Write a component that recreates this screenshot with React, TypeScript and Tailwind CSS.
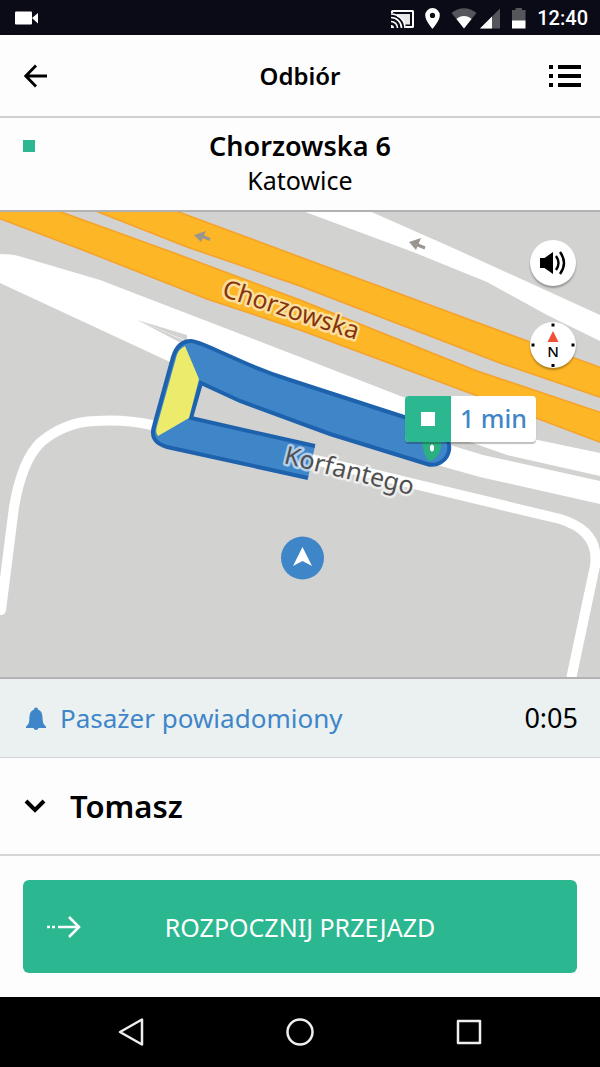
import React, { useState } from 'react';

function StatusBar() {
  return (
    <div className="flex h-[35px] shrink-0 items-center justify-between bg-[#0a0b16] pr-3 pl-[15px] text-white">
      <svg className="h-[14px] w-[23px]" viewBox="0 0 23 14" fill="currentColor">
        <rect width="17" height="13" y="0.5" rx="1" />
        <path d="M17 7l6-5v10.500z" />
      </svg>
      <div className="flex items-center">
        <svg className="h-[22px] w-[136px]" viewBox="391 6 136 22" fill="currentColor">
          <path d="M391 12V10.500a1.500 1.500 0 0 1 1.500-1.500h20a1.500 1.500 0 0 1 1.500 1.500v15a1.500 1.500 0 0 1-1.500 1.500h-7v-2h6.500V11h-19v1z" />
          <path d="M397 13h13v10.500h-5c-.8-4-3.500-6.500-8-7.800z" fillOpacity="0.9" />
          <path d="M391 24a3 3 0 0 1 3 3h-3z" />
          <path d="M391 20.500a6.500 6.500 0 0 1 6.500 6.500M391 16.500A10.500 10.500 0 0 1 401.500 27M391 13A14 14 0 0 1 405 27" fill="none" stroke="currentColor" strokeWidth="1.600" />
          <path d="M432.500 7a7.300 7.300 0 0 0-7.300 7.300c0 5.400 7.300 13.500 7.300 13.500s7.300-8.100 7.300-13.500A7.300 7.300 0 0 0 432.500 7zm0 4.800a2.600 2.600 0 1 1 0 5.200 2.600 2.600 0 0 1 0-5.200z" />
          <path d="M451.500 12c7-6.500 18-6.500 25 0l-12.500 15.500z" fill="#55565c" />
          <path d="M456.500 18c4-4 11-4 15 0l-7.500 9.500z" />
          <path d="M500 7.500V27.500H480z" fill="#55565c" />
          <path d="M492 15.500V27.500H480z" />
          <path d="M512 9h3.500V7h6.500v2h3.500v11H512z" fill="#55565c" />
          <path d="M512 19.500h13.500v8H512z" />
        </svg>
        <span className="ml-[10px] font-[Roboto] text-[20px] leading-6 font-medium">12:40</span>
      </div>
    </div>
  );
}

function Header() {
  return (
    <header className="flex h-[83px] shrink-0 items-center justify-between border-b-2 border-[#d0d0d0] pr-[19px] pl-6">
      <button type="button" aria-label="Wstecz" className="w-[27px]">
        <svg className="h-6 w-6" viewBox="0 0 24 24" fill="none" stroke="black" strokeWidth="2.800">
          <path d="M12 1.500L1.800 12 12 22.500M1.500 12H23" />
        </svg>
      </button>
      <h1 className="text-[24px] leading-8 font-semibold">Odbiór</h1>
      <button type="button" aria-label="Lista" className="w-8">
        <svg className="h-[22px] w-8" viewBox="0 0 32 22">
          <path d="M0 0h4v4H0zM0 9h4v4H0zM0 18h4v4H0zM9 0h23v4H9zM9 9h23v4H9zM9 18h23v4H9z" />
        </svg>
      </button>
    </header>
  );
}

function Address() {
  return (
    <section className="relative flex h-[92px] shrink-0 flex-col items-center pt-3">
      <span className="absolute top-[22px] left-[23px] h-3 w-3 bg-[#2bb78f]" />
      <p className="text-[27px] leading-8 font-semibold">Chorzowska 6</p>
      <p className="mt-[2px] text-[25px] leading-8">Katowice</p>
    </section>
  );
}

function MapDrawing() {
  return (
    <svg className="absolute inset-0 h-full w-full" viewBox="0 210 600 469" preserveAspectRatio="xMidYMid slice">
      <rect y="210" width="600" height="469" fill="#d2d2d1" />

      {/* white roads */}
      <path d="M300 210H367L453 248L600 315V341L547 315L487 282L413 252z" fill="white" />
      <path d="M0 254Q14 254 22 257L100 280L300 357L403 397L533 439L600 453V476L507 455L473 443L440 436L190 343L137 320L187 346L404 430L450 445L483 455L600 481V504L480 477L430 463L170 362L0 283z" fill="white" />
      <path d="M137 320L187 335L187 341z" fill="#d2d2d1" />
      <path d="M1 610L14 507Q22 460 41 442Q65 422 95 421Q125 419 152 425L310 459L560 519Q600 531 595 566L570 684" fill="none" stroke="white" strokeWidth="10" strokeLinecap="round" />

      {/* Chorzowska, both lanes */}
      <g fill="#fdb625" stroke="#f6a22a" strokeWidth="1.500">
        <path d="M88 208L187 247L300 286L500 363L602 398V368L530 342L300 257L168 208z" />
        <path d="M-2 218L80 249L207 299L300 330L475 395L602 443V413L477 371L300 300L177 254L50 208H-2z" />
      </g>

      {/* one-way arrows */}
      <g fill="none" stroke="#98968e" strokeWidth="3">
        <path d="M199 235L210 239.500" />
        <path d="M413 243L425 248" />
      </g>
      <path d="M194 235L206 231L201 242zM409 242L421 238L416 250z" fill="#98968e" />

      <text transform="translate(221 296) rotate(18)" fontSize="25" fontFamily="Noto Sans, sans-serif" fill="#84330d" stroke="#fbdf9e" strokeWidth="5" strokeLinejoin="round" paintOrder="stroke">
        Chorzowska
      </text>

      {/* route */}
      <path d="M308 478L167 447Q149 442 154 426L173 357Q178 341 191 341Q196 341 218 351L245 363Q268 373 290 380L404 417L437 431A17 17 0 0 1 427 464L330 434L240 401L201 383L191 418L315 446z" fill="#3f86c9" />
      <path d="M308 478L167 447Q149 442 154 426L173 357Q178 341 191 341Q196 341 218 351L245 363Q268 373 290 380L404 417L437 431A17 17 0 0 1 427 464L330 434L240 401L201 383L191 418L315 446" fill="none" stroke="#1e62ad" strokeWidth="4" />
      <path d="M185 346L199 379L189 418L158 436Q155 432 157 426L176 358Q178 349 185 346z" fill="#edeb6b" />

      <text transform="translate(283 463) rotate(14)" fontSize="25" fontFamily="Noto Sans, sans-serif" fill="#505050" stroke="#ffffff" strokeOpacity="0.600" strokeWidth="5" strokeLinejoin="round" paintOrder="stroke">
        Korfantego
      </text>

      {/* destination pin */}
      <path d="M422 440H441Q442 450 437 456Q433 461 429 461Q423 455 422 440z" fill="#2bb07f" />
      <ellipse cx="432" cy="448" rx="2" ry="3.500" fill="white" />

      {/* vehicle */}
      <circle cx="302.500" cy="558" r="21.500" fill="#3f86c9" />
      <path d="M302.500 547L312 566L302.500 561L293 566z" fill="white" />
    </svg>
  );
}

function MapView() {
  const [muted, setMuted] = useState(false);

  return (
    <main className="relative min-h-[300px] flex-1 overflow-hidden border-y-2 border-[#b2b2b2]">
      <MapDrawing />
      <div className="absolute top-[184px] left-[405px] flex h-[46px] overflow-hidden rounded-sm bg-white shadow-[0_2px_1px_rgba(0,0,0,0.25)]">
        <div className="flex w-[46px] items-center justify-center bg-[#2bb78f]">
          <span className="h-[14px] w-[14px] bg-white" />
        </div>
        <span className="flex w-[85px] items-center justify-center text-[25px] font-medium text-[#3f86c9]">1 min</span>
      </div>
      <div className="absolute top-7 right-6 flex flex-col gap-9">
        <button
          type="button"
          aria-label="Dźwięk"
          onClick={() => setMuted(!muted)}
          className="flex h-[46px] w-[46px] items-center justify-center rounded-full bg-white shadow-[0_2px_2px_rgba(0,0,0,0.3)]"
        >
          <svg className="h-6 w-[26px]" viewBox="0 0 26 24">
            <path d="M0 7h4.500L13 1v22L4.500 17H0z" />
            {!muted && (
              <path d="M16 5Q21 12 16 19M20 1Q28 12 20 23" fill="none" stroke="black" strokeWidth="2.400" />
            )}
          </svg>
        </button>
        <button
          type="button"
          aria-label="Kompas"
          className="flex h-[46px] w-[46px] items-center justify-center rounded-full bg-white shadow-[0_2px_2px_rgba(0,0,0,0.3)]"
        >
          <svg className="h-[46px] w-[46px]" viewBox="0 0 46 46">
            <path d="M21.500 1.500h3v3h-3zM21.500 42h3v3h-3zM1.500 21.500h3v3h-3zM41.500 21.500h3v3h-3z" />
            <path d="M23 9l5.500 11h-11z" fill="#ee5138" />
            <text x="23" y="35" textAnchor="middle" fontSize="15" fontWeight="500" fontFamily="Noto Sans, sans-serif">N</text>
          </svg>
        </button>
      </div>
    </main>
  );
}

export default function App() {
  const [open, setOpen] = useState(false);

  return (
    <div className="flex min-h-screen flex-col bg-[#fdfdfd] font-['Noto_Sans',sans-serif] text-black">
      <StatusBar />
      <Header />
      <Address />
      <MapView />

      <div className="flex h-[79px] shrink-0 items-center border-b border-[#d0d4d4] bg-[#ebf1f1] pr-[22px] pl-6">
        <svg className="h-6 w-6" viewBox="0 0 24 24" fill="#3f86c9">
          <path d="M2 20.500c2-1.500 3-3 3.300-6.500C5.600 8 6 5 10 3.500a2 2 0 0 1 4 0C18 5 18.400 8 18.700 14c.3 3.500 1.300 5 3.300 6.500V22h-7.500a2.600 2.600 0 0 1-5 0H2z" />
        </svg>
        <p className="ml-3 text-[26px] leading-8 text-[#3f86c9]">Pasażer powiadomiony</p>
        <span className="ml-auto text-[27px] leading-8">0:05</span>
      </div>

      <button
        type="button"
        onClick={() => setOpen(!open)}
        aria-expanded={open}
        className="flex h-[98px] shrink-0 items-center border-b-2 border-[#d6d6d6] pl-6 text-left"
      >
        <svg className="h-[14px] w-[22px]" viewBox="0 0 22 14" fill="none" stroke="black" strokeWidth="4">
          <path d="M2 2l9 9 9-9" />
        </svg>
        <span className="ml-6 text-[31px] leading-10 font-semibold">Tomasz</span>
      </button>

      <div className="shrink-0 px-[23px] py-6">
        <button
          type="button"
          className="relative flex h-[93px] w-full items-center justify-center rounded-md bg-[#2bb78f] text-white"
        >
          <svg className="absolute left-6 h-[22px] w-[34px]" viewBox="0 0 34 22" fill="none" stroke="white" strokeWidth="2.600">
            <path d="M0 11h3M5 11h3M11 11h21M22 1l10 10-10 10" />
          </svg>
          <span className="text-[25px] leading-8">ROZPOCZNIJ PRZEJAZD</span>
        </button>
      </div>

      <nav className="flex h-[70px] shrink-0 items-center justify-around bg-black px-12">
        <button type="button" aria-label="Wróć">
          <svg className="h-7 w-7" viewBox="0 0 28 28" fill="none" stroke="#eeeeee" strokeWidth="2.500" strokeLinejoin="round">
            <path d="M24 1.500v25L2 14z" />
          </svg>
        </button>
        <button type="button" aria-label="Ekran główny">
          <svg className="h-7 w-7" viewBox="0 0 28 28" fill="none" stroke="#eeeeee" strokeWidth="2.500">
            <circle cx="14" cy="14" r="12.500" />
          </svg>
        </button>
        <button type="button" aria-label="Ostatnie">
          <svg className="h-7 w-7" viewBox="0 0 28 28" fill="none" stroke="#eeeeee" strokeWidth="2.500" strokeLinejoin="round">
            <rect x="4" y="3" width="22" height="22" />
          </svg>
        </button>
      </nav>
    </div>
  );
}
